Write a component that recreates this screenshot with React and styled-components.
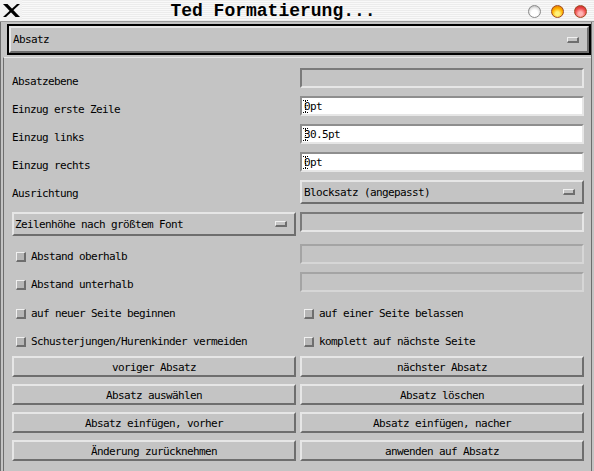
import React from 'react';
import styled, { createGlobalStyle, css } from 'styled-components';

const GlobalStyle = createGlobalStyle`
  html, body {
    margin: 0;
    padding: 0;
    background: #c4c4c4;
  }
  body {
    font-family: "DejaVu Sans Mono", "Liberation Mono", monospace;
    color: #000;
  }
`;

const raised = css`
  box-sizing: border-box;
  border-style: solid;
  border-width: 2px;
  border-color: #e6e6e6 #6e6e6e #6e6e6e #e6e6e6;
  background: #c4c4c4;
`;

const uiText = css`
  font-family: "DejaVu Sans Mono", "Liberation Mono", monospace;
  font-size: 11px;
  letter-spacing: -0.62px;
  white-space: nowrap;
`;

const Window = styled.div`
  width: 594px;
  height: 471px;
  display: flex;
  flex-direction: column;
  overflow: hidden;
  background: #c4c4c4;
`;

const TitleBar = styled.div`
  height: 21px;
  border-bottom: 1px solid #9c9c9c;
  display: flex;
  align-items: center;
  background: repeating-linear-gradient(180deg, #ececec 0 1px, #f9f9f9 1px 2px);
`;

const CloseBox = styled.div`
  width: 22px;
  height: 21px;
  display: flex;
  align-items: center;
  justify-content: center;
  background: #f2f2f2;
`;

const Title = styled.div`
  flex: 1;
  text-align: center;
  font-family: "Liberation Mono", "DejaVu Sans Mono", monospace;
  font-weight: bold;
  font-size: 18px;
  line-height: 21px;
  padding-top: 1px;
  padding-right: 4px;
`;

const Lights = styled.div`
  display: flex;
  gap: 10px;
  padding-right: 7px;
  padding-top: 1px;
`;

const lightColors = {
  gray: 'radial-gradient(circle at 50% 65%, #ffffff 0 35%, #e6e6e6 60%, #9a9a9a 100%)',
  orange: 'radial-gradient(circle at 50% 70%, #fff27a 0 20%, #ffb000 55%, #d96800 100%)',
  red: 'radial-gradient(circle at 50% 70%, #ffb4b4 0 20%, #f05050 55%, #b81818 100%)',
};

const Light = styled.div`
  width: 13px;
  height: 13px;
  border-radius: 50%;
  box-sizing: border-box;
  border: 1px solid ${(p) => (p.$kind === 'gray' ? '#8a8a8a' : '#a04a20')};
  background: ${(p) => lightColors[p.$kind]};
`;

const Body = styled.div`
  flex: 1;
  display: flex;
  flex-direction: column;
  border-left: 1px solid #6e6e6e;
  border-right: 1px solid #6e6e6e;
  margin-right: 2px;
`;

const FocusRing = styled.div`
  margin: 2px 0 0 6px;
  width: 584px;
  height: 31px;
  box-sizing: border-box;
  border: 2px solid #000;
  display: flex;
`;

const OptionMenu = styled.div`
  ${raised};
  ${uiText};
  flex: 1;
  display: flex;
  align-items: center;
  justify-content: space-between;
  padding: 0 ${(p) => p.$padR || 8}px 0 ${(p) => p.$padL || 2}px;
`;

const Indicator = styled.span`
  width: 12px;
  height: 6px;
  box-sizing: border-box;
  border-style: solid;
  border-width: 1px 2px 2px 1px;
  border-color: #f0f0f0 #6e6e6e #6e6e6e #f0f0f0;
  background: #c4c4c4;
`;

const Frame = styled.div`
  flex: 1;
  margin: 2px 0 0 2px;
  border-left: 1px solid #6e6e6e;
  border-top: 1px solid #e6e6e6;
  padding: 10px 0 0 8px;
  display: flex;
  flex-direction: column;
  gap: 8px;
`;

const Row = styled.div`
  display: grid;
  grid-template-columns: 284px 284px;
  column-gap: 4px;
  height: ${(p) => p.$h || 20}px;
  margin-top: ${(p) => p.$mt || 0}px;
`;

const Label = styled.div`
  ${uiText};
  line-height: 20px;
  padding-top: 4px;
`;

const fieldTones = {
  white: css`
    background: #fff;
    border-color: #8e8e8e #e6e6e6 #e6e6e6 #8e8e8e;
  `,
  gray: css`
    background: #c4c4c4;
    border-color: #7a7a7a #e6e6e6 #e6e6e6 #7a7a7a;
  `,
  dim: css`
    background: #c4c4c4;
    border-color: #a4a4a4 #d6d6d6 #d6d6d6 #a4a4a4;
  `,
};

const Field = styled.div`
  ${uiText};
  box-sizing: border-box;
  height: 20px;
  border-style: solid;
  border-width: 2px;
  ${(p) => fieldTones[p.$tone || 'white']};
  position: relative;
  display: flex;
  align-items: center;
  padding: 1px 0 0 2px;
`;

const Caret = styled.span`
  position: absolute;
  left: 1px;
  top: 2px;
  width: 5px;
  height: 12px;
  &::before {
    content: '';
    position: absolute;
    left: 2px;
    top: 0;
    height: 12px;
    border-left: 1px dotted #000;
  }
  &::after {
    content: '';
    position: absolute;
    left: 0;
    top: 0;
    width: 5px;
    height: 11px;
    border-top: 1px dotted #000;
    border-bottom: 1px dotted #000;
  }
`;

const Check = styled.label`
  ${uiText};
  display: flex;
  align-items: center;
  gap: 5px;
  padding: 4px 0 0 4px;
`;

const Box = styled.span`
  width: 10px;
  height: 10px;
  box-sizing: border-box;
  border-style: solid;
  border-width: 1px 2px 2px 1px;
  border-color: #f0f0f0 #6e6e6e #6e6e6e #f0f0f0;
  background: #b6b6b6;
  margin-top: 1px;
`;

const ButtonGrid = styled.div`
  display: grid;
  grid-template-columns: 284px 284px;
  grid-auto-rows: 21px;
  column-gap: 4px;
  row-gap: 7px;
  margin-top: -1px;
`;

const Button = styled.button`
  ${raised};
  ${uiText};
  color: #000;
  height: 21px;
  padding: 1px 0 0;
  margin: 0;
  display: flex;
  align-items: center;
  justify-content: center;
`;

const XLogo = () => (
  <svg width="17" height="13" viewBox="0 0 17 13">
    <polygon points="0,0 4.5,0 17,13 12.5,13" fill="#000" />
    <polygon points="14,0 17,0 3,13 0,13" fill="#000" />
  </svg>
);

const buttons = [
  'voriger Absatz',
  'nächster Absatz',
  'Absatz auswählen',
  'Absatz löschen',
  'Absatz einfügen, vorher',
  'Absatz einfügen, nacher',
  'Änderung zurücknehmen',
  'anwenden auf Absatz',
];

const App = () => {
  return (
    <>
      <GlobalStyle />
      <Window>
        <TitleBar>
          <CloseBox>
            <XLogo />
          </CloseBox>
          <Title>Ted Formatierung...</Title>
          <Lights>
            <Light $kind="gray" />
            <Light $kind="orange" />
            <Light $kind="red" />
          </Lights>
        </TitleBar>
        <Body>
          <FocusRing>
            <OptionMenu>
              Absatz
              <Indicator />
            </OptionMenu>
          </FocusRing>
          <Frame>
            <Row>
              <Label>Absatzebene</Label>
              <Field $tone="gray" />
            </Row>
            <Row>
              <Label>Einzug erste Zeile</Label>
              <Field><Caret />0pt</Field>
            </Row>
            <Row>
              <Label>Einzug links</Label>
              <Field><Caret />30.5pt</Field>
            </Row>
            <Row>
              <Label>Einzug rechts</Label>
              <Field><Caret />0pt</Field>
            </Row>
            <Row $h={24}>
              <Label>Ausrichtung</Label>
              <OptionMenu $padL={2} $padR={7}>
                Blocksatz (angepasst)
                <Indicator />
              </OptionMenu>
            </Row>
            <Row $h={24}>
              <OptionMenu $padL={1} $padR={7}>
                Zeilenhöhe nach größtem Font
                <Indicator />
              </OptionMenu>
              <Field $tone="gray" />
            </Row>
            <Row>
              <Check><Box />Abstand oberhalb</Check>
              <Field $tone="dim" />
            </Row>
            <Row>
              <Check><Box />Abstand unterhalb</Check>
              <Field $tone="dim" />
            </Row>
            <Row $mt={1}>
              <Check><Box />auf neuer Seite beginnen</Check>
              <Check><Box />auf einer Seite belassen</Check>
            </Row>
            <Row>
              <Check><Box />Schusterjungen/Hurenkinder vermeiden</Check>
              <Check><Box />komplett auf nächste Seite</Check>
            </Row>
            <ButtonGrid>
              {buttons.map((b) => (
                <Button key={b}>{b}</Button>
              ))}
            </ButtonGrid>
          </Frame>
        </Body>
      </Window>
    </>
  );
};

export default App;
